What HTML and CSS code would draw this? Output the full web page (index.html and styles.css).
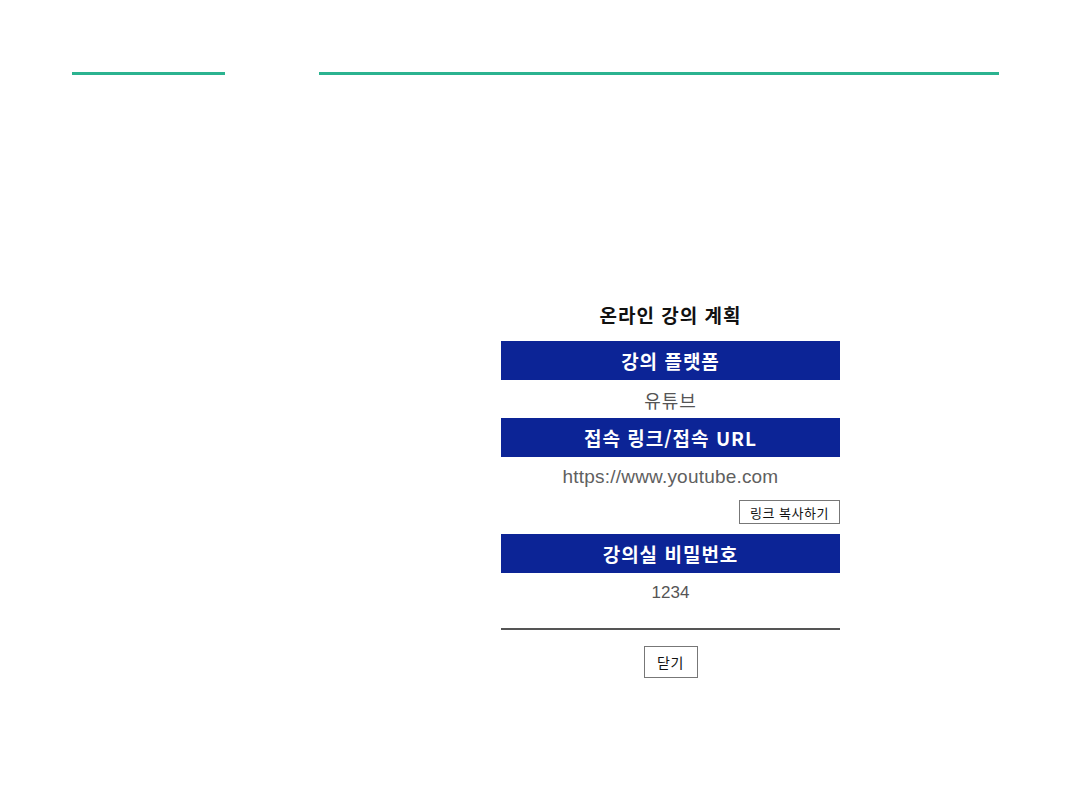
FILE: index.html
```html
<!DOCTYPE html>
<html lang="ko">
<head>
  <meta charset="UTF-8" />
  <title>온라인 강의 계획</title>
  <link rel="stylesheet" href="styles.css">
</head>
<body>

<div class="page">
  <aside class="side">
    <div class="rule"></div>
  </aside>

  <main class="content">
    <div class="rule"></div>

    <section class="plan">
      <h2 class="plan-title">온라인 강의 계획</h2>

      <div class="plan-head">강의 플랫폼</div>
      <div class="plan-value">유튜브</div>

      <div class="plan-head">접속 링크/접속 URL</div>
      <div class="plan-value url">https://www.youtube.com</div>
      <div class="copy-row">
        <button class="btn">링크 복사하기</button>
      </div>

      <div class="plan-head">강의실 비밀번호</div>
      <div class="plan-value num">1234</div>

      <hr class="divider" />

      <div class="close-row">
        <button class="btn btn-close">닫기</button>
      </div>
    </section>
  </main>
</div>

</body>
</html>
```

FILE: styles.css
```css
:root {
  --green: #2bb390;
  --navy: #0c2496;
  --text-muted: #555555;
  --font: "Noto Sans CJK KR", "Noto Sans", sans-serif;
}

body {
  margin: 0;
  padding: 0;
  background: #ffffff;
  font-family: var(--font);
  color: #111111;
}

.page {
  display: flex;
  padding: 72px 81px 0 72px;
  gap: 94px;
}

.side {
  width: 153px;
  flex: none;
}

.content {
  flex: 1;
}

.rule {
  height: 3px;
  background-color: var(--green);
}

.plan {
  width: 339px;
  margin: 225px 0 0 182px;
  display: flex;
  flex-direction: column;
}

.plan-title {
  margin: 0 0 11px;
  height: 30px;
  line-height: 30px;
  font-size: 19px;
  font-weight: bold;
  letter-spacing: 1px;
  text-align: center;
}

.plan-head {
  height: 39px;
  display: flex;
  align-items: center;
  justify-content: center;
  background-color: var(--navy);
  color: #ffffff;
  font-size: 19px;
  font-weight: bold;
  letter-spacing: 1px;
}

.plan-value {
  height: 38px;
  line-height: 40px;
  text-align: center;
  font-size: 18px;
  letter-spacing: 1px;
  color: var(--text-muted);
}

.plan-value.url {
  height: 39px;
  font-family: "Liberation Sans", sans-serif;
  font-size: 19px;
  letter-spacing: 0.2px;
  color: #606060;
}

.plan-value.num {
  font-family: "Liberation Sans", sans-serif;
  font-size: 17px;
  letter-spacing: 0;
}

.copy-row {
  display: flex;
  justify-content: flex-end;
  padding-top: 4px;
  margin-bottom: 10px;
}

.btn {
  font-family: var(--font);
  font-size: 13px;
  letter-spacing: 0.5px;
  color: #111111;
  background: #ffffff;
  border: 1px solid #777777;
  padding: 0;
  height: 24px;
  width: 101px;
  cursor: pointer;
}

.divider {
  margin: 17px 0 0;
  border: none;
  border-top: 2px solid #555555;
}

.close-row {
  display: flex;
  justify-content: center;
  padding-top: 16px;
}

.btn-close {
  width: 54px;
  height: 32px;
  font-size: 14px;
}
```
